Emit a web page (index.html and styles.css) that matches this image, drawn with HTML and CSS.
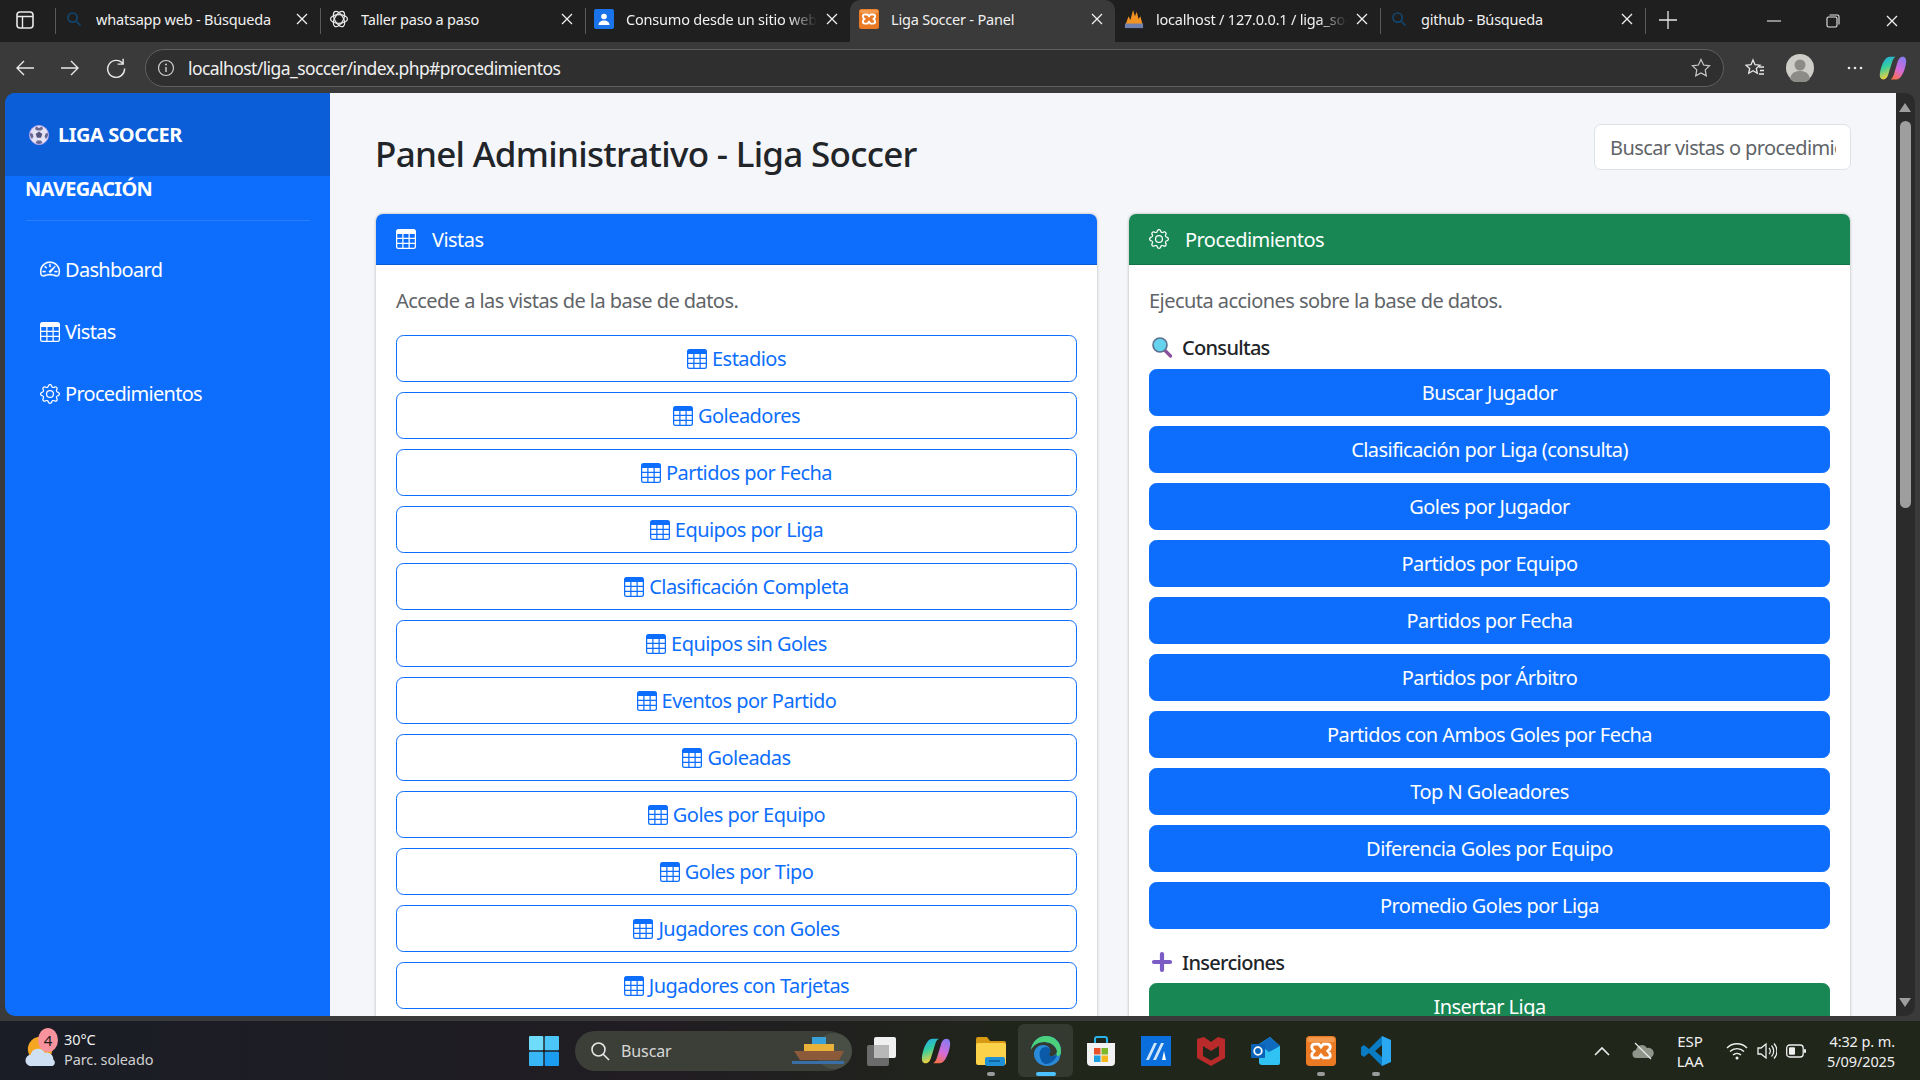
FILE: index.html
```html
<!DOCTYPE html>
<html lang="es">
<head>
  <meta charset="UTF-8" />
  <title>Liga Soccer - Panel</title>
  <link rel="stylesheet" href="styles.css">
</head>
<body>
  <svg class="sprite" xmlns="http://www.w3.org/2000/svg">
    <defs>
      <linearGradient id="g-cop-a" x1="0" y1="0" x2="0.3" y2="1"><stop offset="0" stop-color="#1fa6ee"/><stop offset=".5" stop-color="#35cfa0"/><stop offset="1" stop-color="#f5cf3c"/></linearGradient>
      <linearGradient id="g-cop-b" x1="0.7" y1="0" x2="0.3" y2="1"><stop offset="0" stop-color="#8a7bf0"/><stop offset=".55" stop-color="#d56ad8"/><stop offset="1" stop-color="#f8704a"/></linearGradient>
    </defs>
    <symbol id="i-table" viewBox="0 0 16 16"><path fill="currentColor" d="M0 2a2 2 0 0 1 2-2h12a2 2 0 0 1 2 2v12a2 2 0 0 1-2 2H2a2 2 0 0 1-2-2zm15 2h-4v3h4zm0 4h-4v3h4zm0 4h-4v3h3a1 1 0 0 0 1-1zm-5 3v-3H6v3zm-5 0v-3H1v2a1 1 0 0 0 1 1zm-4-4h4V8H1zm0-4h4V4H1zm5-3v3h4V4zm4 4H6v3h4z"/></symbol>
    <symbol id="i-gear" viewBox="0 0 16 16"><path fill="currentColor" d="M8 4.754a3.246 3.246 0 1 0 0 6.492 3.246 3.246 0 0 0 0-6.492M5.754 8a2.246 2.246 0 1 1 4.492 0 2.246 2.246 0 0 1-4.492 0"/><path fill="currentColor" d="M9.796 1.343c-.527-1.79-3.065-1.79-3.592 0l-.094.319a.873.873 0 0 1-1.255.52l-.292-.16c-1.64-.892-3.433.902-2.54 2.541l.159.292a.873.873 0 0 1-.52 1.255l-.319.094c-1.79.527-1.79 3.065 0 3.592l.319.094a.873.873 0 0 1 .52 1.255l-.16.292c-.892 1.64.901 3.434 2.541 2.54l.292-.159a.873.873 0 0 1 1.255.52l.094.319c.527 1.79 3.065 1.79 3.592 0l.094-.319a.873.873 0 0 1 1.255-.52l.292.16c1.64.893 3.434-.902 2.54-2.541l-.159-.292a.873.873 0 0 1 .52-1.255l.319-.094c1.79-.527 1.79-3.065 0-3.592l-.319-.094a.873.873 0 0 1-.52-1.255l.16-.292c.893-1.64-.902-3.433-2.541-2.54l-.292.159a.873.873 0 0 1-1.255-.52zm-2.633.283c.246-.835 1.428-.835 1.674 0l.094.319a1.873 1.873 0 0 0 2.693 1.115l.291-.16c.764-.415 1.6.42 1.184 1.185l-.159.292a1.873 1.873 0 0 0 1.116 2.692l.318.094c.835.246.835 1.428 0 1.674l-.319.094a1.873 1.873 0 0 0-1.115 2.693l.16.291c.415.764-.42 1.6-1.185 1.184l-.291-.159a1.873 1.873 0 0 0-2.693 1.116l-.094.318c-.246.835-1.428.835-1.674 0l-.094-.319a1.873 1.873 0 0 0-2.692-1.115l-.292.16c-.764.415-1.6-.42-1.184-1.185l.159-.291A1.873 1.873 0 0 0 1.945 8.93l-.319-.094c-.835-.246-.835-1.428 0-1.674l.319-.094A1.873 1.873 0 0 0 3.06 4.377l-.16-.292c-.415-.764.42-1.6 1.185-1.184l.292.159a1.873 1.873 0 0 0 2.692-1.115z"/></symbol>
    <symbol id="i-speed" viewBox="0 0 16 16"><path fill="currentColor" stroke="currentColor" stroke-width=".3" d="M8 4a.5.5 0 0 1 .5.5V6a.5.5 0 0 1-1 0V4.5A.5.5 0 0 1 8 4M3.732 5.732a.5.5 0 0 1 .707 0l.915.914a.5.5 0 1 1-.708.708l-.914-.915a.5.5 0 0 1 0-.707M2 10a.5.5 0 0 1 .5-.5h1.586a.5.5 0 0 1 0 1H2.5A.5.5 0 0 1 2 10m9.5 0a.5.5 0 0 1 .5-.5h1.5a.5.5 0 0 1 0 1H12a.5.5 0 0 1-.5-.5m.754-4.246a.39.39 0 0 0-.527-.02L7.547 9.31a.91.91 0 1 0 1.302 1.258l3.434-4.297a.39.39 0 0 0-.029-.518z"/><path fill="currentColor" stroke="currentColor" stroke-width=".3" d="M0 10a8 8 0 1 1 15.547 2.661c-.442 1.253-1.845 1.602-2.932 1.25C11.309 13.488 9.475 13 8 13c-1.474 0-3.31.488-4.615.911-1.087.352-2.49.003-2.932-1.25A8 8 0 0 1 0 10m8-7a7 7 0 0 0-6.603 9.329c.203.575.923.876 1.68.63C4.397 12.533 6.358 12 8 12s3.604.532 4.923.96c.757.245 1.477-.056 1.68-.631A7 7 0 0 0 8 3"/></symbol>
    <symbol id="i-close" viewBox="0 0 14 14"><path d="M2 2l10 10M12 2L2 12" stroke="currentColor" stroke-width="1.3" fill="none"/></symbol>
    <symbol id="i-search" viewBox="0 0 16 16"><circle cx="6.6" cy="6.6" r="4.6" fill="none" stroke="#12466f" stroke-width="1.7"/><path d="M10 10l4.500 4.500" stroke="#12466f" stroke-width="1.7"/></symbol>
    <symbol id="i-xampp" viewBox="0 0 24 24"><rect width="24" height="24" rx="3" fill="#ea7a23"/><rect x="1" y="1" width="22" height="4" rx="2" fill="#f49a4e"/><path d="M7 6.500h3.200l1.800 2.200 1.800-2.200H17c1.600 0 2.400 1 2.400 2.400 0 1.400-.8 2.100-1.900 3.100 1.100 1 1.900 1.700 1.900 3.100 0 1.400-.8 2.400-2.400 2.400h-3.200L12 15.300l-1.800 2.200H7c-1.600 0-2.400-1-2.400-2.400 0-1.400.8-2.100 1.900-3.100-1.100-1-1.900-1.700-1.900-3.100 0-1.400.8-2.400 2.400-2.400z" fill="none" stroke="#fff" stroke-width="2.300"/></symbol>
    <symbol id="i-copilot" viewBox="0 0 32 32"><path d="M12 3h7c-2 1-3 3-4 6l-4 13c-1 4-3 7-6 7-3.500 0-4.500-3-4-7 1-7 5-19 11-19z" fill="url(#g-cop-a)"/><path d="M20 29h-7c2-1 3-3 4-6l4-13c1-4 3-7 6-7 3.500 0 4.500 3 4 7-1 7-5 19-11 19z" fill="url(#g-cop-b)"/></symbol>
  </svg>

  <div class="window">
    <div class="tabstrip">
      <div class="strip-start">
        <svg class="tabs-btn" width="18" height="18" viewBox="0 0 18 18"><rect x="1" y="1" width="16" height="16" rx="3" fill="none" stroke="#e8e8e8" stroke-width="1.6"/><path d="M1 5.500h16M6.500 5.500V17" stroke="#e8e8e8" stroke-width="1.4"/></svg>
      </div>
      <div class="tab">
        <svg class="tab-icon" width="16" height="16"><use href="#i-search"/></svg>
        <span class="tab-title">whatsapp web - Búsqueda</span>
        <svg class="tab-close" width="14" height="14"><use href="#i-close"/></svg>
      </div>
      <div class="tab">
        <svg class="tab-icon" width="20" height="20" viewBox="0 0 20 20"><g fill="none" stroke="#e8e8e8" stroke-width="1.200"><ellipse cx="10" cy="10" rx="8.500" ry="4.300"/><ellipse cx="10" cy="10" rx="8.500" ry="4.300" transform="rotate(60 10 10)"/><ellipse cx="10" cy="10" rx="8.500" ry="4.300" transform="rotate(120 10 10)"/></g></svg>
        <span class="tab-title">Taller paso a paso</span>
        <svg class="tab-close" width="14" height="14"><use href="#i-close"/></svg>
      </div>
      <div class="tab">
        <svg class="tab-icon" width="20" height="20" viewBox="0 0 20 20"><rect width="20" height="20" rx="2" fill="#1a73e8"/><circle cx="10" cy="7.500" r="2.800" fill="#fff"/><path d="M4.500 16c0-3 2.500-4.500 5.500-4.500s5.500 1.500 5.500 4.500z" fill="#fff"/></svg>
        <span class="tab-title fade">Consumo desde un sitio web</span>
        <svg class="tab-close" width="14" height="14"><use href="#i-close"/></svg>
      </div>
      <div class="tab active">
        <svg class="tab-icon" width="20" height="20"><use href="#i-xampp"/></svg>
        <span class="tab-title">Liga Soccer - Panel</span>
        <svg class="tab-close" width="14" height="14"><use href="#i-close"/></svg>
      </div>
      <div class="tab no-sep">
        <svg class="tab-icon" width="22" height="22" viewBox="0 0 22 22"><path d="M1 19L5 8l2 4 3-11 2 7 2-5 2 8 2-3 3 11z" fill="#f29222"/><rect x="1" y="16" width="20" height="5" fill="#6f7fae"/></svg>
        <span class="tab-title fade">localhost / 127.0.0.1 / liga_soccer</span>
        <svg class="tab-close" width="14" height="14"><use href="#i-close"/></svg>
      </div>
      <div class="tab">
        <svg class="tab-icon" width="16" height="16"><use href="#i-search"/></svg>
        <span class="tab-title">github - Búsqueda</span>
        <svg class="tab-close" width="14" height="14"><use href="#i-close"/></svg>
      </div>
      <div class="new-tab">
        <svg width="18" height="18" viewBox="0 0 18 18"><path d="M9 0v18M0 9h18" stroke="#e8e8e8" stroke-width="1.300"/></svg>
      </div>
      <div class="win-controls">
        <svg width="14" height="14" viewBox="0 0 14 14"><path d="M0 7h14" stroke="#e8e8e8" stroke-width="1.100"/></svg>
        <svg width="14" height="14" viewBox="0 0 14 14"><rect x="1" y="3" width="10" height="10" rx="1.500" fill="none" stroke="#e8e8e8" stroke-width="1.100"/><path d="M3.500 1h8a1.500 1.500 0 0 1 1.500 1.500v8" fill="none" stroke="#e8e8e8" stroke-width="1.100"/></svg>
        <svg width="14" height="14"><use href="#i-close"/></svg>
      </div>
    </div>

    <div class="toolbar">
      <svg class="nav-arrow" width="20" height="20" viewBox="0 0 20 20"><path d="M19 10H2M9 3l-7 7 7 7" fill="none" stroke="#e8e8e8" stroke-width="1.400"/></svg>
      <svg class="nav-arrow" width="20" height="20" viewBox="0 0 20 20"><path d="M1 10h17M11 3l7 7-7 7" fill="none" stroke="#e8e8e8" stroke-width="1.400"/></svg>
      <svg class="nav-arrow" width="22" height="22" viewBox="0 0 20 20"><path d="M16.500 1.500v5h-5M16.500 6.500A7.700 7.700 0 1 0 17.800 10.500" fill="none" stroke="#e8e8e8" stroke-width="1.300"/></svg>
      <div class="address">
        <svg width="18" height="18" viewBox="0 0 18 18"><circle cx="9" cy="9" r="7.500" fill="none" stroke="#d0d0d0" stroke-width="1.200"/><path d="M9 8v5" stroke="#d0d0d0" stroke-width="1.400"/><circle cx="9" cy="5.500" r="1" fill="#d0d0d0"/></svg>
        <span class="url">localhost/liga_soccer/index.php#procedimientos</span>
        <svg class="url-star" width="20" height="20" viewBox="0 0 20 20"><path d="M10 1.500l2.600 5.500 6 .8-4.400 4.100 1.100 6L10 15l-5.300 2.900 1.100-6L1.400 7.800l6-.8z" fill="none" stroke="#c8c8c8" stroke-width="1.200"/></svg>
      </div>
      <div class="toolbar-end">
        <svg class="fav" width="20" height="20" viewBox="0 0 20 20"><path d="M8 2l2 4.700 5 .5-3.700 3.300 1 4.800L8 12.800l-4.300 2.500 1-4.800L1 7.200l5-.5z" fill="none" stroke="#e8e8e8" stroke-width="1.300"/><path d="M14 9h5M15 12.500h4M14 16h5" stroke="#e8e8e8" stroke-width="1.300"/></svg>
        <svg class="avatar" width="28" height="28" viewBox="0 0 28 28"><circle cx="14" cy="14" r="14" fill="#cfcdc8"/><circle cx="14" cy="11" r="5.500" fill="#8d8b87"/><path d="M4 25c1-6 5-8 10-8s9 2 10 8a14 14 0 0 1-20 0z" fill="#8d8b87"/></svg>
        <svg class="more" width="16" height="4" viewBox="0 0 16 4"><circle cx="2" cy="2" r="1.300" fill="#e8e8e8"/><circle cx="8" cy="2" r="1.300" fill="#e8e8e8"/><circle cx="14" cy="2" r="1.300" fill="#e8e8e8"/></svg>
        <svg class="copilot" width="28" height="28"><use href="#i-copilot"/></svg>
      </div>
    </div>

    <div class="viewport">
      <aside class="sidebar">
        <div class="brand">
          <svg width="20" height="20" viewBox="0 0 20 20"><circle cx="10" cy="10" r="9.500" fill="#e4e2f4"/><path d="M10 6.500l3.300 2.400-1.300 3.900H8l-1.300-3.900z" fill="#55547c"/><path d="M7 1.500L10 3l3-1.500 1 2.500-2 1.500H8l-2-1.500zM1 8l2.500.5 1 3-1.500 2.500-2-3zM19 8l-2.500.5-1 3 1.500 2.500 2-3zM6.500 18l1.500-2.500h4l1.500 2.500-3.500 1.500z" fill="#6a6992"/><circle cx="10" cy="10" r="9.500" fill="none" stroke="#b3a4ea" stroke-width="1"/></svg>
          <span>LIGA SOCCER</span>
        </div>
        <div class="nav-title">NAVEGACIÓN</div>
        <nav class="nav">
          <a class="nav-link"><svg width="20" height="20"><use href="#i-speed"/></svg>Dashboard</a>
          <a class="nav-link"><svg width="20" height="20"><use href="#i-table"/></svg>Vistas</a>
          <a class="nav-link"><svg width="20" height="20"><use href="#i-gear"/></svg>Procedimientos</a>
        </nav>
      </aside>

      <main class="content">
        <div class="page-head">
          <h1>Panel Administrativo - Liga Soccer</h1>
          <input class="search" type="text" placeholder="Buscar vistas o procedimientos" />
        </div>

        <div class="cards">
          <section class="card">
            <div class="card-header bg-blue"><svg width="20" height="20"><use href="#i-table"/></svg>Vistas</div>
            <div class="card-body">
              <p class="muted">Accede a las vistas de la base de datos.</p>
              <a class="btn btn-outline"><svg width="20" height="20"><use href="#i-table"/></svg>Estadios</a>
              <a class="btn btn-outline"><svg width="20" height="20"><use href="#i-table"/></svg>Goleadores</a>
              <a class="btn btn-outline"><svg width="20" height="20"><use href="#i-table"/></svg>Partidos por Fecha</a>
              <a class="btn btn-outline"><svg width="20" height="20"><use href="#i-table"/></svg>Equipos por Liga</a>
              <a class="btn btn-outline"><svg width="20" height="20"><use href="#i-table"/></svg>Clasificación Completa</a>
              <a class="btn btn-outline"><svg width="20" height="20"><use href="#i-table"/></svg>Equipos sin Goles</a>
              <a class="btn btn-outline"><svg width="20" height="20"><use href="#i-table"/></svg>Eventos por Partido</a>
              <a class="btn btn-outline"><svg width="20" height="20"><use href="#i-table"/></svg>Goleadas</a>
              <a class="btn btn-outline"><svg width="20" height="20"><use href="#i-table"/></svg>Goles por Equipo</a>
              <a class="btn btn-outline"><svg width="20" height="20"><use href="#i-table"/></svg>Goles por Tipo</a>
              <a class="btn btn-outline"><svg width="20" height="20"><use href="#i-table"/></svg>Jugadores con Goles</a>
              <a class="btn btn-outline"><svg width="20" height="20"><use href="#i-table"/></svg>Jugadores con Tarjetas</a>
            </div>
          </section>

          <section class="card">
            <div class="card-header bg-green"><svg width="20" height="20"><use href="#i-gear"/></svg>Procedimientos</div>
            <div class="card-body">
              <p class="muted">Ejecuta acciones sobre la base de datos.</p>
              <h6 class="group-title">
                <svg width="22" height="22" viewBox="0 0 22 22"><path d="M13.500 14l6 6" stroke="#8a4f9c" stroke-width="3.200" stroke-linecap="round"/><circle cx="9" cy="9" r="7" fill="#65d3ee" stroke="#5c6f8f" stroke-width="1.600"/></svg>
                Consultas
              </h6>
              <a class="btn btn-blue">Buscar Jugador</a>
              <a class="btn btn-blue">Clasificación por Liga (consulta)</a>
              <a class="btn btn-blue">Goles por Jugador</a>
              <a class="btn btn-blue">Partidos por Equipo</a>
              <a class="btn btn-blue">Partidos por Fecha</a>
              <a class="btn btn-blue">Partidos por Árbitro</a>
              <a class="btn btn-blue">Partidos con Ambos Goles por Fecha</a>
              <a class="btn btn-blue">Top N Goleadores</a>
              <a class="btn btn-blue">Diferencia Goles por Equipo</a>
              <a class="btn btn-blue">Promedio Goles por Liga</a>
              <h6 class="group-title group-next">
                <svg width="22" height="22" viewBox="0 0 22 22"><path d="M11 3v16M3 11h16" stroke="#7a5cc4" stroke-width="4.200" stroke-linecap="round"/></svg>
                Inserciones
              </h6>
              <a class="btn btn-green">Insertar Liga</a>
            </div>
          </section>
        </div>
      </main>

      <div class="scrollbar">
        <span class="arrow-up"></span>
        <span class="thumb"></span>
        <span class="arrow-down"></span>
      </div>
    </div>

    <footer class="taskbar">
      <div class="weather">
        <svg width="34" height="40" viewBox="0 0 36 40"><circle cx="16" cy="18" r="13" fill="#f5a623"/><path d="M7 36a6 6 0 0 1-1-12 8 8 0 0 1 15-2 7 7 0 0 1 9 7 4 4 0 0 1-1 7z" fill="#cfe0f5"/></svg>
        <span class="weather-badge">4</span>
        <div class="weather-text">
          <span>30°C</span>
          <span class="dim">Parc. soleado</span>
        </div>
      </div>

      <div class="task-center">
        <svg class="win-logo" width="30" height="30" viewBox="0 0 30 30"><g fill="#36b6f5"><rect width="14.300" height="14.300" rx="1" fill="#6fdcfb"/><rect x="15.700" width="14.300" height="14.300" rx="1" fill="#4cc6f8"/><rect y="15.700" width="14.300" height="14.300" rx="1" fill="#38b6f6"/><rect x="15.700" y="15.700" width="14.300" height="14.300" rx="1" fill="#1c9cf0"/></g></svg>
        <div class="task-search">
          <svg width="20" height="20" viewBox="0 0 20 20"><circle cx="8.500" cy="8.500" r="6.500" fill="none" stroke="#e8e8e8" stroke-width="1.600"/><path d="M13 13l6 6" stroke="#e8e8e8" stroke-width="1.600"/></svg>
          <span>Buscar</span>
          <svg class="search-art" width="66" height="40" viewBox="0 0 66 40"><circle cx="48" cy="20" r="18" fill="#4a4f46"/><path d="M8 20h50l-5 9H14z" fill="#8c5a3a"/><rect x="18" y="13" width="30" height="7" fill="#e8b23a"/><rect x="26" y="6" width="14" height="7" fill="#3aa0d8"/><path d="M6 30h52v3H6z" fill="#3b6ea5"/></svg>
        </div>
        <div class="task-icon">
          <svg width="30" height="30" viewBox="0 0 30 30"><rect x="1" y="9" width="22" height="21" rx="2" fill="#6b6b6b"/><rect x="8" y="1" width="22" height="21" rx="2" fill="#f0f0f0"/><rect x="8" y="9" width="15" height="13" fill="#b8b8b8"/></svg>
        </div>
        <div class="task-icon"><svg width="30" height="30"><use href="#i-copilot"/></svg></div>
        <div class="task-icon open">
          <svg width="30" height="30" viewBox="0 0 30 30"><path d="M0 3a2 2 0 0 1 2-2h9l3 4h14a2 2 0 0 1 2 2v2H0z" fill="#d99a13"/><rect y="7" width="30" height="22" rx="2" fill="#fcd24a"/><rect x="9" y="21" width="20" height="9" rx="2" fill="#1f8fd6"/><path d="M13 25h11" stroke="#0c5a96" stroke-width="1.500"/></svg>
        </div>
        <div class="task-icon current">
          <svg width="30" height="30" viewBox="0 0 30 30"><path d="M15 0C7 0 1 6 0 14c2-5 7-8 13-8 7 0 12 4 13 9 0 3-2 5-5 5-2 0-3 0-3-2 3-4 0-9-6-9-5 0-9 4-9 9 0 7 6 12 13 12 5 0 9-2 12-6 1-3 2-6 2-9C30 6 24 0 15 0z" fill="#2a8ad8"/><path d="M15 0c8 0 15 6 15 15 0 3-1 5-4 5h-5c3 0 5-2 5-5-1-5-6-9-13-9-6 0-11 3-13 8C1 6 7 0 15 0z" fill="#4bd07c"/><path d="M9 21c-2-8 4-12 9-9 2 2 2 4 0 6 0 2 1 2 3 2 3 0 5-2 5-2 0 5-6 10-11 10-3 0-5-3-6-7z" fill="#0b5aa8"/></svg>
        </div>
        <div class="task-icon">
          <svg width="30" height="30" viewBox="0 0 30 30"><path d="M9 8V3a2 2 0 0 1 2-2h8a2 2 0 0 1 2 2v5" fill="none" stroke="#28b3e8" stroke-width="2"/><path d="M1 7h28v19a4 4 0 0 1-4 4H5a4 4 0 0 1-4-4z" fill="#f2f2f2"/><rect x="8" y="12" width="6.500" height="6.500" fill="#e8522a"/><rect x="15.500" y="12" width="6.500" height="6.500" fill="#7cb82a"/><rect x="8" y="19.500" width="6.500" height="6.500" fill="#1f9ee0"/><rect x="15.500" y="19.500" width="6.500" height="6.500" fill="#f8b81c"/></svg>
        </div>
        <div class="task-icon">
          <svg width="30" height="30" viewBox="0 0 30 30"><rect width="30" height="30" fill="#0a6fdc"/><path d="M5 24L13 7h3L8 24zM12 24L20 7h3L15 24z" fill="#cfe6fb"/><path d="M21 24l2-9 2 9z" fill="#fff"/></svg>
        </div>
        <div class="task-icon">
          <svg width="28" height="30" viewBox="0 0 28 30"><path d="M0 3l7-2 7 5 7-5 7 2v19l-14 8L0 22zM6 10v10l8 4.500 8-4.500V10l-8 5z" fill="#b92b2b" fill-rule="evenodd"/></svg>
        </div>
        <div class="task-icon">
          <svg width="30" height="30" viewBox="0 0 30 30"><path d="M8 8l11-7 10 9v17a2 2 0 0 1-2 2H11a3 3 0 0 1-3-3z" fill="#2fc2f2"/><path d="M8 8l11-7 10 9-11 6z" fill="#0f6bbf"/><rect y="8" width="14" height="14" rx="1" fill="#0a62b8"/><circle cx="7" cy="15" r="3.800" fill="none" stroke="#fff" stroke-width="1.800"/></svg>
        </div>
        <div class="task-icon open"><svg width="30" height="30"><use href="#i-xampp"/></svg></div>
        <div class="task-icon open">
          <svg width="30" height="30" viewBox="0 0 30 30"><path d="M21 0l9 4v22l-9 4z" fill="#2aa8f2"/><path d="M21 9l-7 6 7 6V30L8 17l-5 4-3-2v-8l3-2 5 4L21 0z" fill="#0a7cc4" fill-rule="evenodd"/></svg>
        </div>
      </div>

      <div class="tray">
        <svg class="tray-chevron" width="16" height="10" viewBox="0 0 16 10"><path d="M1 9l7-7 7 7" fill="none" stroke="#e8e8e8" stroke-width="1.700"/></svg>
        <svg width="22" height="18" viewBox="0 0 22 18"><path d="M5 16a4 4 0 0 1-1-8 6 6 0 0 1 11-2 5 5 0 0 1 3 10z" fill="#8f958a"/><path d="M3 1l16 16" stroke="#e8e8e8" stroke-width="1.200"/></svg>
        <div class="lang"><span>ESP</span><span>LAA</span></div>
        <svg width="22" height="18" viewBox="0 0 22 18"><g fill="none" stroke="#f0f0f0" stroke-width="1.400"><path d="M1 6a14 14 0 0 1 20 0"/><path d="M4 9.500a10 10 0 0 1 14 0"/><path d="M7 13a6 6 0 0 1 8 0"/></g><circle cx="11" cy="16" r="1.500" fill="#f0f0f0"/></svg>
        <svg width="20" height="18" viewBox="0 0 20 18"><path d="M1 6h3l5-4v14l-5-4H1z" fill="none" stroke="#f0f0f0" stroke-width="1.300"/><path d="M12 6a4 4 0 0 1 0 6M14.500 3.500a8 8 0 0 1 0 11M17 1.500a11 11 0 0 1 0 15" fill="none" stroke="#f0f0f0" stroke-width="1.200"/></svg>
        <svg width="20" height="14" viewBox="0 0 20 14"><rect x=".7" y="1" width="16.500" height="12" rx="3" fill="none" stroke="#f0f0f0" stroke-width="1.300"/><rect x="3" y="3.300" width="6" height="7.400" rx="1" fill="#f0f0f0"/><rect x="18" y="5" width="2" height="4" rx="1" fill="#f0f0f0"/></svg>
        <div class="clock"><span>4:32 p. m.</span><span>5/09/2025</span></div>
      </div>
    </footer>
  </div>
</body>
</html>
```

FILE: styles.css
```css
* {
  box-sizing: border-box;
}

body {
  margin: 0;
  font-family: "Noto Sans", "Open Sans", sans-serif;
  font-size: 20px;
  letter-spacing: -0.55px;
  color: #212529;
  overflow: hidden;
}

.sprite {
  position: absolute;
  width: 0;
  height: 0;
}

.window {
  width: 1920px;
  height: 1080px;
  display: flex;
  flex-direction: column;
  background: #3a3a3a;
}

/* tabs */
.tabstrip {
  height: 42px;
  display: flex;
  align-items: stretch;
  background: #1f1f1f;
  color: #f0f0f0;
  font-size: 14.5px;
  letter-spacing: -0.2px;
}

.strip-start {
  width: 55px;
  display: flex;
  align-items: center;
  padding: 0 0 3px 16px;
}

.tab {
  width: 265px;
  position: relative;
  display: flex;
  align-items: center;
  padding: 0 11px 4px 0;
}

.tab::before {
  content: "";
  position: absolute;
  left: 0;
  top: 8px;
  bottom: 8px;
  width: 1px;
  background: #5a5a5a;
}

.tab.active {
  background: #3a3a3a;
  border-radius: 10px 10px 0 0;
}

.tab.active::before,
.tab.no-sep::before {
  display: none;
}

.tab-icon {
  flex: 0 0 auto;
  width: 20px;
  margin: 0 12px 0 9px;
}

.tab-title {
  flex: 1;
  white-space: nowrap;
  overflow: hidden;
}

.tab-title.fade {
  -webkit-mask-image: linear-gradient(to right, #000 85%, transparent);
  mask-image: linear-gradient(to right, #000 85%, transparent);
}

.tab-close {
  flex: 0 0 auto;
  margin-left: 8px;
}

.new-tab {
  width: 46px;
  display: flex;
  align-items: center;
  justify-content: center;
  padding-bottom: 3px;
  position: relative;
}

.new-tab::before {
  content: "";
  position: absolute;
  left: 0;
  top: 8px;
  bottom: 8px;
  width: 1px;
  background: #5a5a5a;
}

.win-controls {
  margin-left: auto;
  width: 153px;
  display: flex;
  align-items: center;
  justify-content: space-between;
  padding: 0 21px 0 0;
}

/* address row */
.toolbar {
  height: 51px;
  display: flex;
  align-items: center;
  background: #3a3a3a;
  padding: 0 0 0 15px;
}

.nav-arrow {
  margin-right: 25px;
  flex: 0 0 auto;
}

.address {
  width: 1579px;
  height: 38px;
  margin-left: -7px;
  border: 1.5px solid #5f5f5f;
  border-radius: 19px;
  background: #2f2f2f;
  display: flex;
  align-items: center;
  padding: 0 12px 0 11px;
  color: #f0f0f0;
  font-size: 17.5px;
  letter-spacing: -0.58px;
}

.url {
  flex: 1;
  margin-left: 13px;
}

.toolbar-end {
  flex: 1;
  display: flex;
  align-items: center;
}

.fav {
  margin-left: 21px;
}

.avatar {
  margin-left: 21px;
}

.more {
  margin-left: 33px;
}

.copilot {
  margin-left: 16px;
}

/* page */
.viewport {
  height: 923px;
  display: flex;
  padding: 0 5px;
  overflow: hidden;
}

.sidebar {
  width: 325px;
  flex: 0 0 auto;
  background: #0d6efd;
  color: #fff;
  border-radius: 10px 0 0 10px;
  overflow: hidden;
}

.brand {
  height: 83px;
  display: flex;
  align-items: center;
  gap: 9px;
  padding-left: 24px;
  background: #0b5ed7;
  font-weight: 700;
  letter-spacing: -0.45px;
}

.nav-title {
  height: 26px;
  line-height: 26px;
  padding-left: 20px;
  font-weight: 700;
  letter-spacing: -0.7px;
}

.nav {
  margin: 18px 20px 0 21px;
  padding-top: 17px;
  border-top: 1px solid #2a7efc;
}

.nav-link {
  height: 62.400px;
  display: flex;
  align-items: center;
  gap: 5px;
  padding-left: 14px;
  letter-spacing: -0.7px;
}

.content {
  flex: 1;
  background: #f4f6f9;
  padding: 30px 45px 0 46px;
  overflow: hidden;
}

.page-head {
  height: 91px;
  display: flex;
  justify-content: space-between;
  align-items: flex-start;
}

h1 {
  margin: 0 0 0 -1px;
  font-size: 35px;
  font-weight: 500;
  line-height: 62px;
  letter-spacing: -0.72px;
}

.search {
  width: 257px;
  height: 46px;
  margin-top: 1px;
  padding: 0 14px 0 15px;
  border: 1px solid #dee2e6;
  border-radius: 7px;
  background: #fff;
  font: inherit;
  letter-spacing: -0.6px;
}

.search::placeholder {
  color: #5f6468;
  opacity: 1;
}

.cards {
  display: grid;
  grid-template-columns: 721px 721px;
  gap: 32px;
}

.card {
  background: #fff;
  border-radius: 7px 7px 0 0;
  box-shadow: 0 0 3px rgba(0, 0, 0, 0.3);
}

.card-header {
  height: 51px;
  display: flex;
  align-items: center;
  gap: 16px;
  padding-left: 20px;
  color: #fff;
  border-radius: 7px 7px 0 0;
  border-bottom: 1px solid rgba(0, 0, 0, 0.15);
}

.bg-blue {
  background: #0d6efd;
}

.bg-green {
  background: #198754;
}

.card-body {
  padding: 20px;
}

.muted {
  margin: 0 0 18px;
  line-height: 32px;
  color: #5f6468;
}

.group-title {
  height: 26px;
  margin: 0 0 8px;
  display: flex;
  align-items: center;
  gap: 9px;
  padding-left: 2px;
  font-size: 20px;
  font-weight: 500;
  position: relative;
  top: -1px;
  letter-spacing: -0.7px;
}

.group-next {
  margin-top: 20px;
  top: 0;
}

.btn {
  height: 47px;
  margin-bottom: 10px;
  display: flex;
  align-items: center;
  justify-content: center;
  gap: 5px;
  border-radius: 7.5px;
  border: 1.5px solid #0d6efd;
}

.btn-outline {
  color: #0d6efd;
  background: #fff;
}

.btn-blue {
  color: #fff;
  background: #0d6efd;
}

.btn-green {
  color: #fff;
  background: #198754;
  border-color: #198754;
}

.scrollbar {
  width: 19px;
  flex: 0 0 auto;
  background: #2b2b2b;
  border-radius: 0 10px 10px 0;
  position: relative;
}

.arrow-up,
.arrow-down {
  position: absolute;
  left: 3px;
  width: 0;
  height: 0;
  border-left: 6px solid transparent;
  border-right: 6px solid transparent;
}

.arrow-up {
  top: 10px;
  border-bottom: 9px solid #9e9e9e;
}

.arrow-down {
  bottom: 9px;
  border-top: 9px solid #9e9e9e;
}

.thumb {
  position: absolute;
  left: 4px;
  top: 28px;
  width: 11px;
  height: 387px;
  border-radius: 6px;
  background: #9e9e9e;
}

/* windows taskbar */
.taskbar {
  height: 64px;
  border-top: 5px solid #3a3a3a;
  display: flex;
  align-items: center;
  background: linear-gradient(90deg, #1a1d26 0%, #211d22 35%, #20261a 55%, #20261a 100%);
  color: #f0f0f0;
  font-size: 14.5px;
  letter-spacing: -0.1px;
}

.weather {
  width: 525px;
  flex: 0 0 auto;
  display: flex;
  align-items: center;
  gap: 5px;
  padding-left: 25px;
  position: relative;
}

.weather-badge {
  position: absolute;
  left: 38px;
  top: -3px;
  width: 20px;
  height: 24px;
  border-radius: 50%;
  background: #f8929c;
  color: #1a1a1a;
  font-size: 15px;
  text-align: center;
  line-height: 24px;
}

.weather-text {
  display: flex;
  flex-direction: column;
  line-height: 20px;
  margin-top: -3px;
}

.dim {
  color: #d0d0d0;
}

.task-center {
  display: flex;
  align-items: center;
}

.win-logo {
  margin-right: 16px;
  margin-left: 4px;
}

.task-search {
  width: 274px;
  height: 40px;
  margin-right: 4px;
  display: flex;
  align-items: center;
  gap: 11px;
  padding-left: 15px;
  border-radius: 20px;
  background: #3b3f38;
  font-size: 16px;
  color: #d8d8d8;
  position: relative;
}

.search-art {
  position: absolute;
  right: -3px;
  top: 0;
}

.task-icon {
  width: 55px;
  height: 53px;
  display: flex;
  align-items: center;
  justify-content: center;
  position: relative;
}

.task-icon.current {
  background: #343a2f;
  border-radius: 6px;
}

.task-icon.open::after,
.task-icon.current::after {
  content: "";
  position: absolute;
  bottom: 1px;
  left: 50%;
  height: 4px;
  border-radius: 2px;
}

.task-icon.open::after {
  width: 8px;
  margin-left: -4px;
  background: #9a9a9a;
}

.task-icon.current::after {
  width: 20px;
  margin-left: -10px;
  background: #4cc2ff;
}

.tray {
  margin-left: auto;
  display: flex;
  align-items: center;
  padding-right: 25px;
  gap: 9px;
}

.tray-chevron {
  margin-right: 13px;
}

.lang {
  width: 50px;
  margin: 0 2px 0 2px;
  display: flex;
  flex-direction: column;
  align-items: center;
  font-size: 15px;
  line-height: 20px;
}

.clock {
  margin-left: 12px;
  display: flex;
  flex-direction: column;
  align-items: flex-end;
  line-height: 20px;
}
```
